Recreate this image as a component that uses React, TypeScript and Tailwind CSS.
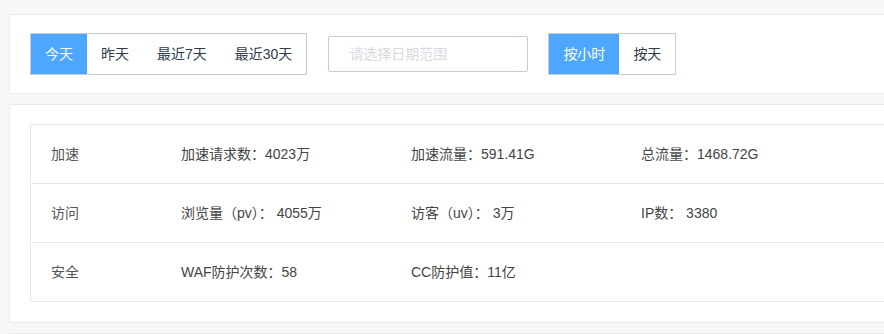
import { useState } from 'react';

const ranges = ['今天', '昨天', '最近7天', '最近30天'];
const units = ['按小时', '按天'];

const rows = [
  { label: '加速', items: ['加速请求数：4023万', '加速流量：591.41G', '总流量：1468.72G'] },
  { label: '访问', items: ['浏览量（pv）： 4055万', '访客（uv）： 3万', 'IP数： 3380'] },
  { label: '安全', items: ['WAF防护次数：58', 'CC防护值：11亿', ''] },
];

export default function App() {
  const [range, setRange] = useState(0);
  const [unit, setUnit] = useState(0);

  return (
    <div
      className="h-screen overflow-hidden bg-[#f8f8f8] pl-[9px] pt-[14px] text-[14px] text-[#333]"
      style={{ fontFamily: '"Liberation Sans", Arial, "Noto Sans CJK SC", sans-serif' }}
    >
      <div className="w-[1100px]">
        {/* Filters */}
        <div className="flex items-center border border-[#ebebeb] bg-white px-5 py-[18px]">
          <div className="flex h-[42px] border border-[#c4ccd6]">
            {ranges.map((r, i) => (
              <button
                key={r}
                onClick={() => setRange(i)}
                className={`h-full px-[14px] text-[14px] ${
                  range === i ? 'bg-[#4da6ff] text-white' : 'text-[#2f3a4a]'
                } ${i === 0 ? 'w-[56px]' : ''}`}
              >
                {r}
              </button>
            ))}
          </div>
          <div className="ml-[21px] flex h-[36px] w-[200px] items-center rounded-[2px] border border-[#c4ccd6] px-5 text-[14px] text-[#d6dae0]">
            请选择日期范围
          </div>
          <div className="ml-[20px] flex h-[42px] border border-[#c4ccd6]">
            {units.map((u, i) => (
              <button
                key={u}
                onClick={() => setUnit(i)}
                className={`h-full px-[14px] text-[14px] ${
                  unit === i ? 'bg-[#4da6ff] text-white' : 'text-[#2f3a4a]'
                }`}
              >
                {u}
              </button>
            ))}
          </div>
        </div>

        {/* Stats */}
        <div className="mt-[10px] border border-[#ebebeb] bg-white pb-5 pl-5 pt-[19px]">
          <div className="border border-[#e4e9f0]">
            {rows.map((row, i) => (
              <div
                key={row.label}
                className={`flex h-[58px] items-center ${i > 0 ? 'h-[59px] border-t border-[#e4e9f0]' : ''}`}
              >
                <div className="w-[130px] pl-5 text-[#555]">{row.label}</div>
                {row.items.map((it, j) => (
                  <div key={j} className="w-[230px] pl-5 text-[#444]">
                    {it}
                  </div>
                ))}
              </div>
            ))}
          </div>
        </div>

        <div className="mt-[10px] flex h-[40px] border-t border-[#ebebeb] bg-white">
          <div className="ml-[2px] h-[2px] w-[52px] bg-[#eaeaea]" />
        </div>
      </div>
    </div>
  );
}
